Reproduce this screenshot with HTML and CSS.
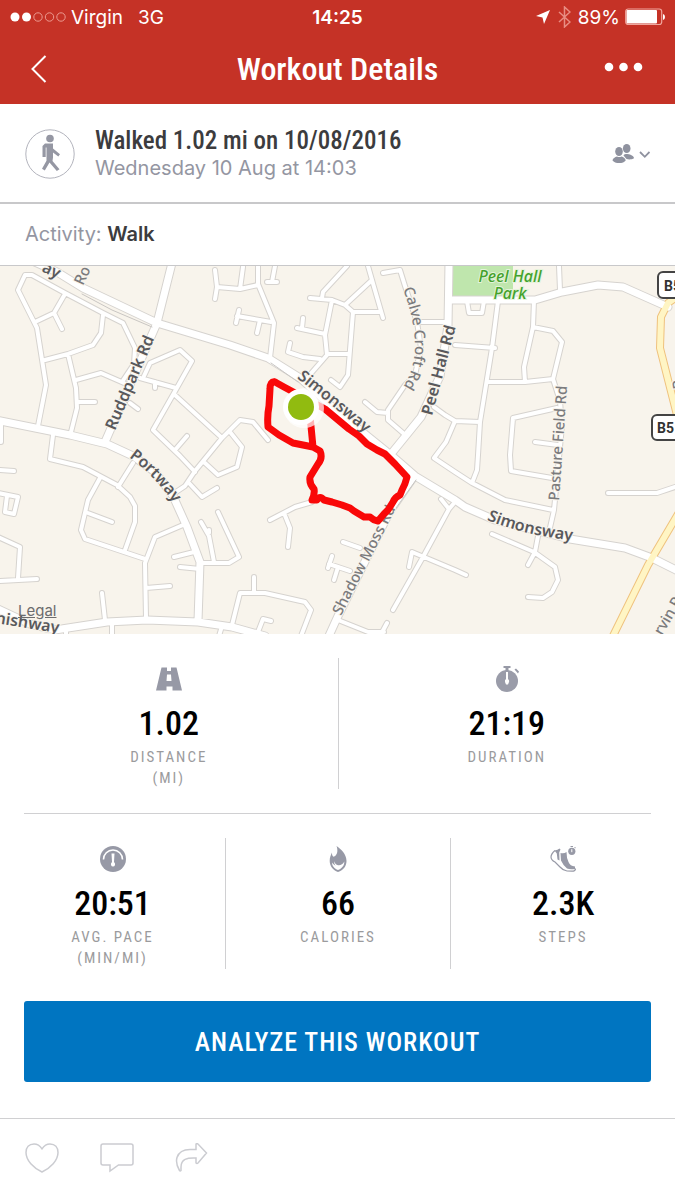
FILE: index.html
```html
<!DOCTYPE html>
<html lang="en">
<head>
  <meta charset="UTF-8">
  <meta name="viewport" content="width=device-width, initial-scale=1">
  <title>Workout Details</title>
  <link rel="stylesheet" href="styles.css">
</head>
<body>

  <header class="header">
    <div class="status">
      <div class="status-left">
        <svg class="signal" width="56" height="12" viewBox="0 0 56 12" aria-hidden="true">
          <circle cx="5" cy="6" r="4.5" fill="#fff"/>
          <circle cx="16.500" cy="6" r="4.500" fill="#fff"/>
          <g fill="none" stroke="#ec9a90">
            <circle cx="28" cy="6" r="4.200"/>
            <circle cx="39.500" cy="6" r="4.200"/>
            <circle cx="51" cy="6" r="4.200"/>
          </g>
        </svg>
        <span>Virgin</span>
        <span class="network">3G</span>
      </div>
      <time class="clock">14:25</time>
      <div class="status-right">
        <svg width="16" height="16" viewBox="0 0 16 16" aria-hidden="true"><path d="M15 1 9 15 7.500 8.500 1 7z" fill="#fff"/></svg>
        <svg class="bluetooth" width="13" height="22" viewBox="0 0 13 22" fill="none" stroke="#e88d83" stroke-width="1.500" aria-hidden="true"><path d="M1 6l11 10-5.500 5V1L12 6 1 16"/></svg>
        <span>89%</span>
        <svg width="40" height="18" viewBox="0 0 40 18" aria-hidden="true">
          <rect x=".7" y="1" width="36" height="15.500" rx="2.500" fill="none" stroke="#f0a69d" stroke-width="1.200"/>
          <rect x="1.500" y="2" width="30.500" height="13.500" rx="1" fill="#fff"/>
          <path d="M38 6q2 .5 2 3t-2 3z" fill="#fff"/>
        </svg>
      </div>
    </div>
    <nav class="nav">
      <button class="nav-btn" type="button" aria-label="Back">
        <svg width="16" height="28" viewBox="0 0 16 28" fill="none" stroke="#fff" stroke-width="2"><path d="M14.500 1 1.500 14l13 13"/></svg>
      </button>
      <h1>Workout Details</h1>
      <button class="nav-btn nav-more" type="button" aria-label="More">
        <svg width="40" height="10" viewBox="0 0 40 10" fill="#fff"><circle cx="5" cy="5" r="4.300"/><circle cx="19.500" cy="5" r="4.300"/><circle cx="34" cy="5" r="4.300"/></svg>
      </button>
    </nav>
  </header>

  <main>
    <section class="summary">
      <svg class="summary-icon" width="50" height="50" viewBox="0 0 50 50" aria-hidden="true">
        <circle cx="25" cy="25" r="24.200" fill="none" stroke="#b3b4bd"/>
        <g fill="#9597a3">
          <circle cx="25" cy="9.500" r="3.800"/>
          <path d="M20 14.500h8v5l7 5.800-1.700 2.200-5.300-4v5l-.5 3.500 7 8.200-2.700 1.800-7.300-8.500-4.700 8-2.800-1.800 4.500-8V18.500h-.8V28H17.500V17z"/>
        </g>
      </svg>
      <div class="summary-text">
        <h2>Walked 1.02 mi on 10/08/2016</h2>
        <p>Wednesday 10 Aug at 14:03</p>
      </div>
      <button class="privacy" type="button" aria-label="Shared with friends">
        <svg width="38" height="22" viewBox="0 0 38 22" fill="#8f929f">
          <g>
            <ellipse cx="14.700" cy="5.500" rx="3.800" ry="4.500"/>
            <path d="M11.500 12.500c.5-1.800 5-1.800 6.500-1 2 .7 4 2 4 3.700-2 1.300-5 1.500-7.500.8z"/>
            <ellipse cx="7" cy="8.500" rx="3.800" ry="4.500"/>
            <path d="M.5 17.500C.7 15.400 3 14 5 13.500q2.200 1.200 4.500 0c2 .5 4 1.900 4.200 4-2 3.400-11 3.400-13.200 0z"/>
          </g>
          <path d="M28 9l4.800 4.800L37.500 9" fill="none" stroke="#8f929f" stroke-width="1.800"/>
        </svg>
      </button>
    </section>

    <p class="activity">Activity: <strong>Walk</strong></p>

    <div class="map">
      <svg class="map-art" viewBox="0 0 675 368" role="img" aria-label="Route of the walk">
        <defs>
          <path id="minor" d="M122 116 134 98 135 82 123 57 103 47 65 27 32 9H25L18 24 37 62 46 119 38 160
            M35 56 54 47 65 28M54 47l8 16M45 94 68 88 93 79 101 67 103 49M68 88 76 122 77 142 71 166
            M76 114 101 107 124 117M77 136H95M144 110 150 97 180 84 192 95 174 127 153 164 180 190 195 206
            M140 112 176 122M155 116v6M130 137l8 6M175 129 222 172M268 174 253 156 240 154 222 172 195 205 185 220 176 226
            M175 184 187 170M230 166 242 181 237 201 218 209 205 197M188 216 202 231 217 222
            M215 4l2 17-2 12M217 21 240 23 258 19M243 1 240 23M258 0V18L274 57 270 92M275 0 272 16M267 16H277
            M236 57 239 44M237 50 271 56M260 54 257 67M347 0 323 26 322 32M310 32 332 34 345 39 353 46 380 46
            M368 0 372 14 383 52M372 14 345 39M332 34 325 69 327 89 307 112M297 62 325 68M303 52 302 62
            M290 77 288 86 303 91 320 93M327 88H348M353 46 348 109 340 121 331 114
            M383 7 400 4 405 20 417 56 421 82 415 109 405 119 388 144V154L403 167M417 56H448M365 136 377 146 388 147
            M434 141 445 149 455 155 480 156M455 155 446 176 434 192 455 206 472 217 505 234 553 244
            M467 35 469 47H482L484 35M498 35 492 82 480 156 478 189 477 204 472 217M455 79 495 82
            M487 116H525L553 113M534 34 533 61 524 101 525 116M533 61 553 65 562 76 553 113 560 135 562 160 554 244 549 266
            M538 270 535 286 528 299M559 0 560 24M557 142 513 152 510 189 511 205 552 212M535 176 558 179
            M492 268 534 286 555 301 558 314 552 326 543 332 528 331M608 227H657L675 221
            M441 233 449 243 455 236M449 243 423 291 393 344M409 301 412 286 424 291 455 304 466 309
            M270 254 295 241 312 236M284 247 290 262 288 281M343 276 360 282M332 290 328 302M329 298 350 305M338 301 334 314
            M218 246 239 291 229 297 200 297M254 311V327M232 359 240 327H265L305 336 311 344 301 370M258 366 263 353 271 355
            M338 354 368 366H384M387 357 380 370M53 169 50 193 83 201 117 219 130 231 135 240V256L125 284
            M100 212 88 234 81 264 85 273 145 293M133 197 118 221M88 247 112 256M183 259 155 271 145 297 146 352
            M174 291 194 286M180 301 200 303M146 322 170 320M201 256 209 270 214 296M209 267V264M102 327 105 354
            M112 357V370M66 362V370M222 360 219 370M0 204 14 205M-2 227 18 231 14 248 5 246 7 230
            M-2 271 20 281 18 312M-2 315 37 313M1 158V176"/>
          <path id="major" d="M28-7 57 6 83 22 157 57 230 79 268 92 300 112 340 148 392 190 415 210 455 234 465 241 495 254 570 273 625 282 652 292 680 306
            M172-3 157 57 105 176M-4 154 70 169 107 178 133 190 155 206 173 230 187 261 200 296 198 355
            M-4 342 30 358 55 364 107 356 147 354 198 356 232 361 265 370M413 212 390 245 338 350 328 372
            M449-3 448 60 440 110 421 151 391 188M449 34H535L562 26 598 19 623 21 668 41"/>
          <path id="yellow" d="M681 28 668 37 661 51 660 82 679 157M681 243 648 299 611 374"/>
          <path id="simonsway-top" d="M297 112 Q332 139 372 173"/>
          <path id="simonsway-low" d="M487 254 Q525 270 585 276"/>
          <path id="portway" d="M129 191 Q154 209 176 240"/>
          <path id="calve-croft" d="M403 23 Q415 54 415 82 Q414 108 399 126"/>
        </defs>
        <rect class="land" width="675" height="368"/>
        <path class="park" d="M452 0h61v28l-10 5h-51z"/>
        <use class="minor-edge" href="#minor"/>
        <use class="major-edge" href="#major"/>
        <use class="yellow-edge" href="#yellow"/>
        <use class="minor-road" href="#minor"/>
        <use class="major-road" href="#major"/>
        <use class="yellow-road" href="#yellow"/>
        <path class="bypass" d="M82 28 112 44 152 61M271 97 298 116"/>
        <path class="bypass" d="M416 214 396 242"/>

        <g class="shields">
          <rect x="658" y="6" width="40" height="26" rx="5"/>
          <rect x="652" y="149" width="44" height="25" rx="5"/>
          <text x="664" y="25">B5</text>
          <text x="657" y="167">B5</text>
        </g>
        <g class="road-names main-names">
          <text transform="translate(41 5) rotate(26)">ay</text>
          <text transform="translate(115 165) rotate(-67)">Ruddpark Rd</text>
          <text transform="translate(432 150) rotate(-75)">Peel Hall Rd</text>
          <text transform="translate(-5 357) rotate(9)">nishway</text>
          <text><textPath href="#simonsway-top">Simonsway</textPath></text>
          <text><textPath href="#simonsway-low">Simonsway</textPath></text>
          <text><textPath href="#portway">Portway</textPath></text>
        </g>
        <g class="road-names">
          <text transform="translate(83 20) rotate(-65)">Ro</text>
          <text transform="translate(341 350) rotate(-63)">Shadow Moss Rd</text>
          <text transform="translate(559 235) rotate(-86)">Pasture Field Rd</text>
          <text transform="translate(662 370) rotate(-60)">rvin Rd</text>
          <text transform="translate(684 122) rotate(-100)">R</text>
          <text><textPath href="#calve-croft">Calve Croft Rd</textPath></text>
        </g>
        <g class="park-name">
          <text x="510" y="16">Peel Hall</text>
          <text x="510" y="33">Park</text>
        </g>

        <path class="route" d="M275 116Q270 115 270 123L269 140Q267 150 268 161L279 169 293 177 303 179 313 181 310 150M275 116 284 121 325 143 337 153 349 163 359 170 367 178 377 184 385 188 395 198 407 211Q405 219 402 224L400 229Q395 231 393 236L388 244 384 248 378 255Q373 254 370 251L364 251 354 245 350 242 342 239 332 236 324 234Q320 229 317 234L312 234Q315 228 314 223 309 218 310 211L318 198Q323 192 320 185L313 181"/>
        <circle class="pin-shade" cx="304" cy="142" r="20"/>
        <circle cx="301" cy="141" r="18" fill="#fff"/>
        <circle cx="301" cy="141" r="13" fill="#91bb10"/>
      </svg>
      <a class="legal" href="#">Legal</a>
    </div>

    <section class="stats">
      <div class="stat-row">
        <div class="stat">
          <svg width="26" height="26" viewBox="0 0 26 26" aria-hidden="true">
            <path fill="#9799a6" fill-rule="evenodd" d="M5.500 1.500h5.500V5h4V1.500h5.500L26 24.500h-9.500v-4h-6v4H0zM11 8.500l-.5 6.500h5L15 8.500z"/>
          </svg>
          <strong>1.02</strong>
          <span>Distance<br>(mi)</span>
        </div>
        <div class="stat">
          <svg width="26" height="26" viewBox="0 0 26 26" aria-hidden="true">
            <circle cx="13" cy="15" r="11" fill="#9a9ca9"/>
            <path d="M9.500 0h7v2h-2v3h-3V2h-2zM20.500 3.500l1.500-1 3 3-1 2z" fill="#9799a6"/>
            <path d="M12 6h2v7q1.500 1 1 3l-1 2.500h-2L11 16q-.5-2 1-3z" fill="#fff"/>
          </svg>
          <strong>21:19</strong>
          <span>Duration</span>
        </div>
      </div>
      <hr>
      <div class="stat-row">
        <div class="stat">
          <svg width="26" height="26" viewBox="0 0 26 26" aria-hidden="true">
            <circle cx="13" cy="13" r="13" fill="#9799a6"/>
            <path d="M3.500 13.500a9.500 9.500 0 0 1 19 0" fill="none" stroke="#fff" stroke-width="1.600"/>
            <path d="M11.500 7.500h3L14 16q1.500 1.500 1 3-.5 1.500-2 1.500T11 19q-.5-1.500 1-3z" fill="#fff"/>
          </svg>
          <strong>20:51</strong>
          <span>Avg. Pace<br>(min/mi)</span>
        </div>
        <div class="stat">
          <svg width="26" height="26" viewBox="0 0 26 26" aria-hidden="true">
            <path fill="#9799a6" fill-rule="evenodd" d="M11.500 0C16 3 21.500 8 21.500 15c0 5-3 9-8.500 11-5-1.800-8.300-6-8.300-11 0-3.500 1-6 2.300-8.500-.1 2 .2 3.500 1.500 4.200C12 10 13.500 5 11.500 0zM7 16.500c0 3.500 2.500 6 6 7.500 3.600-1.500 6.500-4.300 6.300-8.500C18 18 16 19.200 14 19.200c-3 0-4.500-2.500-4.800-4-.2 1.800.2 3 1.300 4.200C9 19 8 18 7 16.500z"/>
          </svg>
          <strong>66</strong>
          <span>Calories</span>
        </div>
        <div class="stat">
          <svg width="26" height="26" viewBox="0 0 26 26" aria-hidden="true">
            <path d="M5 4.500Q1 8 1 11t4 5l5 5q3 3.500 7 4l5 .2q3.500-.2 3.500-2.700" fill="none" stroke="#9799a6" stroke-width="1.200"/>
            <path d="M4.500 4.500Q8 4 9.500 2.600l1 .8-1.300 3 .3 8.100-2-1-.7-6z" fill="#9799a6"/>
            <path d="M10.500 7q3.500 1 6-1 0 6 2 10 1.500 4 6.500 4.500v2.500q-5 .8-8-.5-3.500-2.500-6-8z" fill="#9799a6"/>
            <circle cx="21.800" cy="5.300" r="3.600" fill="#9799a6"/>
            <path d="M20.500.5h2.500M24.500 1l1.300 1.300" stroke="#9799a6"/>
            <path d="M21.800 3.200v3" stroke="#fff"/>
          </svg>
          <strong>2.3K</strong>
          <span>Steps</span>
        </div>
      </div>

      <button class="analyze" type="button">Analyze this workout</button>
    </section>
  </main>

  <footer class="actions">
    <button type="button" aria-label="Like">
      <svg width="34" height="30" viewBox="0 0 34 30"><path d="M17 5.800C19 2.800 22 1 25 1c5 0 8 3.500 8 8.500 0 8-7.500 15.500-16 19.500C8.500 25 1 17.500 1 9.500 1 4.500 4 1 9 1c3 0 6 1.800 8 4.800z"/></svg>
    </button>
    <button type="button" aria-label="Comment">
      <svg width="34" height="30" viewBox="0 0 34 30"><path d="M3 1h28q2 0 2 2v17q0 2-2 2H18.500L10 28v-6H3q-2 0-2-2V3q0-2 2-2z"/></svg>
    </button>
    <button type="button" aria-label="Share">
      <svg width="34" height="30" viewBox="0 0 34 30"><path d="M21 6.500V1q1-.7 2 0l8.500 9L23 20q-1 .8-2 0v-5C12 14.500 6 16 6 24v3.500q-.8 1-1.500 0C1.500 22.500 1 18 2 14.500 4 8.500 9.500 6.500 15 6.500z"/></svg>
    </button>
  </footer>

</body>
</html>
```

FILE: styles.css
```css
* {
  box-sizing: border-box;
}
body {
  margin: 0;
  background: #fff;
  color: #3c3c3e;
  font-family: Inter, Roboto, sans-serif;
}
h1, h2, p {
  margin: 0;
}
button {
  padding: 0;
  border: none;
  background: none;
  font: inherit;
  cursor: pointer;
}
svg {
  display: block;
  flex: none;
}

/* header */
.header {
  height: 104px;
  background: #c53226;
  color: #fff;
}
.status {
  display: grid;
  grid-template-columns: 1fr auto 1fr;
  align-items: center;
  height: 34px;
  padding: 0 10px;
  font-size: 19px;
}
.status-left, .status-right {
  display: flex;
  align-items: center;
  gap: 5px;
}
.status-right {
  justify-content: flex-end;
}
.network {
  margin-left: 10px;
}
.bluetooth {
  margin: 0 2px;
}
.clock {
  font-weight: 600;
}
.nav {
  display: flex;
  align-items: center;
  justify-content: space-between;
  height: 70px;
  padding: 0 31px;
}
.nav-btn {
  display: flex;
  align-items: center;
  width: 40px;
  height: 44px;
}
.nav-more {
  justify-content: flex-end;
  padding-bottom: 4px;
}
h1, h2, .stat strong, .stat span, .analyze {
  font-family: "Roboto Condensed", "Liberation Sans Narrow", Roboto, sans-serif;
}
h1 {
  font-size: 32px;
  font-weight: 500;
}

/* workout summary */
.summary {
  display: flex;
  align-items: center;
  gap: 20px;
  height: 100px;
  padding: 2px 25px 0;
  border-bottom: 2px solid #c8c8ca;
}
.summary-text {
  flex: 1;
}
.summary h2 {
  font-size: 25px;
  line-height: 28px;
  font-weight: 500;
}
.summary p {
  color: #9496a2;
  font-size: 20px;
  line-height: 26px;
}
.activity {
  height: 62px;
  padding: 0 25px;
  border-bottom: 1px solid #c8c8ca;
  color: #9496a2;
  font-size: 20px;
  line-height: 60px;
}
.activity strong {
  color: #3c3c3e;
  font-weight: 600;
}

/* map */
.map {
  position: relative;
}
.map-art {
  width: 100%;
  height: auto;
  overflow: hidden;
}
.land {
  fill: #f8f4ec;
}
.park {
  fill: #bfe6ad;
}
.minor-edge, .minor-road, .major-edge, .major-road, .yellow-edge, .yellow-road, .bypass, .route {
  fill: none;
  stroke-linecap: round;
  stroke-linejoin: round;
}
.minor-edge {
  stroke: #d6d3cf;
  stroke-width: 6;
}
.major-edge {
  stroke: #d6d3cf;
  stroke-width: 9;
}
.yellow-edge {
  stroke: #efc27e;
  stroke-width: 8;
}
.minor-road {
  stroke: #fff;
  stroke-width: 4;
}
.major-road {
  stroke: #fff;
  stroke-width: 7;
}
.yellow-road {
  stroke: #fff5c4;
  stroke-width: 6;
}
.bypass {
  stroke: #c9c6c3;
  stroke-width: 1;
}
.road-names {
  fill: #7b7b7d;
  stroke: #f8f4ec;
  stroke-width: 2px;
  paint-order: stroke;
  font: 500 15px "Noto Sans", sans-serif;
}
.main-names {
  fill: #59595c;
  font-size: 16px;
  font-weight: 600;
}
.park-name {
  fill: #44a22c;
  stroke: #e4f3da;
  stroke-width: 2px;
  paint-order: stroke;
  font: italic 500 16px "Noto Sans", sans-serif;
  text-anchor: middle;
}
.shields rect {
  fill: #fff;
  stroke: #444;
  stroke-width: 2;
}
.shields text {
  fill: #333;
  font: bold 14px Roboto, sans-serif;
}
.route {
  stroke: #f90808;
  stroke-width: 7;
}
.pin-shade {
  fill: #fff;
  opacity: 0.7;
}
.legal {
  position: absolute;
  left: 18px;
  bottom: 14px;
  color: #6c6c6e;
  font-size: 15px;
  line-height: 18px;
}

/* stats */
.stat-row {
  display: grid;
  grid-auto-columns: 1fr;
  grid-auto-flow: column;
  padding: 24px 0;
}
.stats hr {
  margin: 0 24px;
  border: none;
  border-top: 1px solid #d0d0d2;
}
.stat {
  display: flex;
  flex-direction: column;
  align-items: center;
  padding-top: 8px;
  text-align: center;
}
.stat + .stat {
  border-left: 1px solid #d0d0d2;
}
.stat strong {
  margin-top: 9px;
  color: #000;
  font-size: 34px;
  font-weight: 500;
  line-height: 44px;
}
.stat span {
  padding-top: 2px;
  color: #9b9b9d;
  font-size: 15px;
  line-height: 21px;
  letter-spacing: 2px;
  text-transform: uppercase;
}
.analyze {
  display: block;
  width: calc(100% - 48px);
  height: 81px;
  margin: 8px 24px 36px;
  border-radius: 3px;
  background: #0075c1;
  color: #fff;
  font-size: 26px;
  font-weight: 500;
  letter-spacing: 1px;
  text-transform: uppercase;
}

/* like, comment, share */
.actions {
  display: flex;
  gap: 41px;
  padding: 24px 25px;
  border-top: 1px solid #d0d0d2;
}
.actions svg {
  fill: none;
  stroke: #cbccd1;
  stroke-width: 1.5px;
}
```
